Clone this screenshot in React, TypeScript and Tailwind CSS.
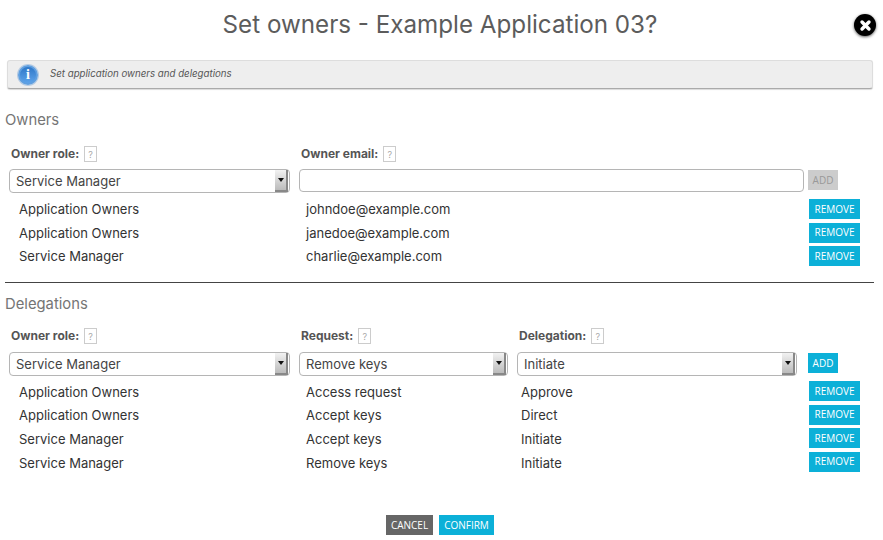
const owners = [
  { role: 'Application Owners', email: 'johndoe@example.com' },
  { role: 'Application Owners', email: 'janedoe@example.com' },
  { role: 'Service Manager', email: 'charlie@example.com' },
];

const delegations = [
  { role: 'Application Owners', request: 'Access request', delegation: 'Approve' },
  { role: 'Application Owners', request: 'Accept keys', delegation: 'Direct' },
  { role: 'Service Manager', request: 'Accept keys', delegation: 'Initiate' },
  { role: 'Service Manager', request: 'Remove keys', delegation: 'Initiate' },
];

function Help() {
  return (
    <span className="ml-[5px] flex h-[16px] w-[13px] items-center justify-center border border-[#ccc] text-[9px] font-normal leading-none text-[#aaa]">
      ?
    </span>
  );
}

function Label({ text, className }: { text: string; className: string }) {
  return (
    <div className={`flex items-center text-[12px] font-bold text-[#555] ${className}`}>
      {text}
      <Help />
    </div>
  );
}

function Select({ value, className }: { value: string; className: string }) {
  return (
    <div className={`flex h-[24px] items-stretch justify-between rounded-[4px] border border-[#b5b5b5] bg-white pl-[6px] ${className}`}>
      <span className="self-center pt-[2px] text-[13px] text-[#444]">{value}</span>
      <span className="mr-[1px] flex w-[13px] items-center justify-center border-r-2 border-b-2 border-[#888] bg-gradient-to-b from-[#f2f2f2] to-[#bbb]">
        <span className="h-0 w-0 border-x-[3px] border-t-[4px] border-x-transparent border-t-[#111]" />
      </span>
    </div>
  );
}

function RemoveButton() {
  return (
    <button className="flex h-[20px] w-[51px] items-center justify-center bg-[#0cb0d8] font-['Open_Sans',sans-serif] text-[10px] text-white">
      REMOVE
    </button>
  );
}

export default function App() {
  return (
    <div className="relative h-[540px] w-[883px] overflow-hidden bg-white font-['Inter','Lato',sans-serif] text-[#333]">
      <h1 className="pt-[8px] pr-[3px] text-center text-[24.2px] leading-[34px] text-[#5c5c5c]">
        Set owners - Example Application 03?
      </h1>

      {/* close badge */}
      <div className="absolute top-[14px] left-[854px] flex h-[22px] w-[22px] items-center justify-center rounded-full bg-black shadow-[0_1px_3px_rgba(0,0,0,0.65)]">
        <svg viewBox="0 0 12 12" className="h-[13px] w-[13px]">
          <path d="M2.8 2.8 L9.2 9.2 M9.2 2.8 L2.8 9.2" stroke="white" strokeWidth="3.2" strokeLinecap="round" />
        </svg>
      </div>

      <div className="mt-[18px] ml-[7px] flex h-[29px] w-[866px] items-center rounded-[3px] border border-[#ddd] border-b-[#aaa] bg-[#eee] shadow-[0_1px_1px_rgba(0,0,0,0.15)]">
        <span className="ml-[10px] flex h-[20px] w-[20px] items-center justify-center rounded-full border-2 border-[#5f9fe0] bg-gradient-to-b from-[#2f78c8] to-[#5da3ea] shadow-[0_0_0_1px_#b5cbe3]">
          <span className="font-['Liberation_Serif',serif] text-[14px] font-bold leading-none text-white">i</span>
        </span>
        <span className="ml-[12px] text-[9.7px] italic text-[#555]">Set application owners and delegations</span>
      </div>

      <h2 className="mt-[22px] ml-[5px] text-[14.8px] leading-[18px] text-[#757575]">Owners</h2>

      <div className="mt-[17px] flex h-[16px] pl-[11px]">
        <Label text="Owner role:" className="w-[290px]" />
        <Label text="Owner email:" className="" />
      </div>

      <div className="mt-[7px] flex items-start pl-[9px]">
        <Select value="Service Manager" className="w-[281px]" />
        <div className="ml-[9px] h-[23px] w-[505px] rounded-[4px] border border-[#b5b5b5] bg-white" />
        <button className="mt-[1px] ml-[4px] h-[20px] w-[30px] bg-[#ccc] font-['Open_Sans',sans-serif] text-[10px] text-[#999]">ADD</button>
      </div>

      <div className="mt-[6px] flex flex-col gap-[3.5px]">
        {owners.map((o) => (
          <div key={o.email} className="flex h-[20px] items-center text-[13px]">
            <span className="ml-[19px] w-[287px] pt-[2px]">{o.role}</span>
            <span className="w-[503px] pt-[2px]">{o.email}</span>
            <RemoveButton />
          </div>
        ))}
      </div>

      <hr className="mt-[16px] ml-[5px] w-[869px] border-t border-[#444]" />

      <h2 className="mt-[12px] ml-[5px] text-[14.8px] leading-[18px] text-[#757575]">Delegations</h2>

      <div className="mt-[15px] flex h-[16px] pl-[11px]">
        <Label text="Owner role:" className="w-[290px]" />
        <Label text="Request:" className="w-[218px]" />
        <Label text="Delegation:" className="" />
      </div>

      <div className="mt-[8px] flex items-start pl-[9px]">
        <Select value="Service Manager" className="w-[281px]" />
        <Select value="Remove keys" className="ml-[9px] w-[209px]" />
        <Select value="Initiate" className="ml-[9px] w-[280px]" />
        <button className="mt-[1px] ml-[11px] h-[20px] w-[30px] bg-[#0cb0d8] font-['Open_Sans',sans-serif] text-[10px] text-white">ADD</button>
      </div>

      <div className="mt-[5px] flex flex-col gap-[3.6px]">
        {delegations.map((d, i) => (
          <div key={i} className="flex h-[20px] items-center text-[13px]">
            <span className="ml-[19px] w-[287px] pt-[3px]">{d.role}</span>
            <span className="w-[215px] pt-[3px]">{d.request}</span>
            <span className="w-[288px] pt-[3px]">{d.delegation}</span>
            <RemoveButton />
          </div>
        ))}
      </div>

      <div className="mt-[43px] flex justify-center gap-[6px] pr-[3px]">
        <button className="h-[20px] w-[47px] bg-[#666] pt-[1px] font-['Open_Sans',sans-serif] text-[10px] text-white">CANCEL</button>
        <button className="h-[20px] w-[55px] bg-[#0cb0d8] pt-[1px] font-['Open_Sans',sans-serif] text-[10px] text-white">CONFIRM</button>
      </div>
    </div>
  );
}
